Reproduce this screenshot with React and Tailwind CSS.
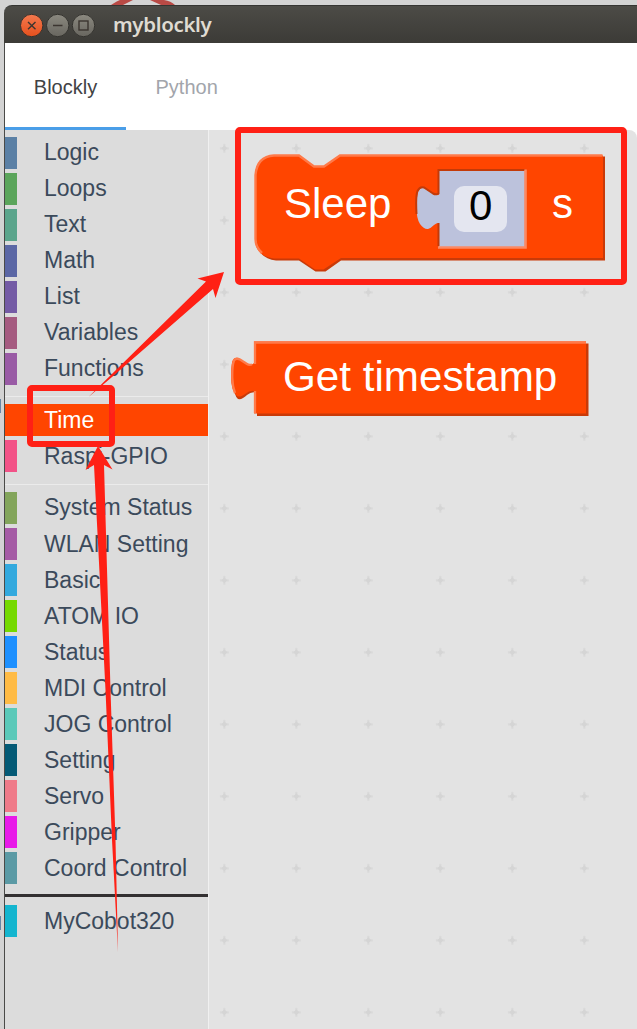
import React from "react";

const groups = [
  {
    items: [
      ["Logic", "bg-[#5b80a5]", "leading-[30px]"],
      ["Loops", "bg-[#5ba55b]", "leading-[30px]"],
      ["Text", "bg-[#5ba58c]", "leading-[30px]"],
      ["Math", "bg-[#5b67a5]", "leading-[30px]"],
      ["List", "bg-[#745ba5]", "leading-[30px]"],
      ["Variables", "bg-[#a55b80]", "leading-[30px]"],
      ["Functions", "bg-[#995ba5]", "leading-[30px]"],
    ],
    divider: "light",
  },
  {
    items: [
      ["Time", "bg-[#ff4500]", "leading-8", true],
      ["Raspi-GPIO", "bg-[#f25287]", "leading-8"],
    ],
    divider: "light",
  },
  {
    items: [
      ["System Status", "bg-[#83a55b]", "leading-[31px]"],
      ["WLAN Setting", "bg-[#a55ba5]", "leading-[33px]"],
      ["Basic", "bg-[#33a9de]", "leading-[33px]"],
      ["ATOM IO", "bg-[#75d900]", "leading-[33px]"],
      ["Status", "bg-[#1e90ff]", "leading-[33px]"],
      ["MDI Control", "bg-[#ffbb45]", "leading-[33px]"],
      ["JOG Control", "bg-[#5bc9b9]", "leading-[33px]"],
      ["Setting", "bg-[#045a76]", "leading-[33px]"],
      ["Servo", "bg-[#ef7b89]", "leading-[33px]"],
      ["Gripper", "bg-[#e81ae8]", "leading-[33px]"],
      ["Coord Control", "bg-[#5b9aa5]", "leading-[33px]"],
    ],
    divider: "dark",
  },
  { items: [["MyCobot320", "bg-[#14b5cf]", "leading-[33px]"]] },
];

function Category({ item }) {
  const [name, color, leading, selected] = item;
  return (
    <li
      className={
        selected
          ? "mb-1 flex h-8 items-start bg-[#ff4500] text-white"
          : "mb-1 flex h-8 items-start text-[#3b4a5b]"
      }
    >
      <span className={`h-[31.5px] w-3 shrink-0 ${color}`} />
      <span className={`ml-[27px] whitespace-nowrap text-[23px] ${leading}`}>{name}</span>
    </li>
  );
}

function Toolbox() {
  return (
    <ul className="w-[203px] shrink-0 bg-[#dcdcdc] pt-[7px]">
      {groups.map((group, i) => (
        <React.Fragment key={i}>
          {group.items.map((item) => (
            <Category key={item[0]} item={item} />
          ))}
          {group.divider === "light" && (
            <li className={i === 1 ? "flex h-4 items-center" : "flex h-[15px] items-center"}>
              <span className="h-px w-full bg-[#ebebeb]" />
            </li>
          )}
          {group.divider === "dark" && (
            <li className="flex h-[17px] items-center pb-[3px]">
              <span className="h-[3px] w-full bg-[#333031]" />
            </li>
          )}
        </React.Fragment>
      ))}
    </ul>
  );
}

function Workspace() {
  return (
    <section className="relative min-w-0 flex-1 overflow-hidden rounded-tr-lg border-l border-[#f0f0f0] bg-[#e3e3e3]">
      <svg className="absolute top-0 -left-px h-[899px] w-[429px]" viewBox="208 130 429 899">
        <defs>
          <pattern id="grid" x="188" y="112" width="72" height="72" patternUnits="userSpaceOnUse">
            <path d="M31.8 36.3h9M36.3 31.8v9" stroke="#dadada" strokeWidth="2.2" />
            <path d="M33.300 36.300L36.300 33.300L39.300 36.300L36.300 39.300Z" fill="#d5d5d5" />
          </pattern>
        </defs>
        <rect x="208" y="130" width="429" height="899" fill="url(#grid)" />

        <path d="M275 156.5H299L314 167H324.5L340 156.5H605V260.5H341L325.5 271.5H315.5L299 260.5H276Q256.500 258 256.500 239V175Q258 158 275 156.500Z" fill="#c93a08" />
        <path d="M274 155H299L314 166H324L339 155.500H603V258H341L323.500 269.500H315L299 258.500H274Q255 256 255 239V175Q256 156 274 155Z" fill="#ff4500" />
        <path d="M262 253Q255.500 247 255.500 239V175Q257 156.500 274 155.500H299L314 166.500H324L340 155.500H602.500" fill="none" stroke="#ff7a49" strokeWidth="2.400" />

        <path d="M439 171V194.500Q437 196 433 194L424 188Q420 187 418 192Q416.500 198 416.500 207Q416.500 219 420 224Q424 229.500 428 229Q431 228 434 225Q437 222.500 439 223V247H525V171Z" fill="#bcc2dc" />
        <path d="M416.500 214Q415.500 196 417.500 191Q420 186 424 187.500L433 193.500Q436 195 438.500 193.500V170H525M438.500 246V223" fill="none" stroke="#c33a08" strokeWidth="2" />
        <path d="M438 247.500H525.500V169.500" fill="none" stroke="#fb8964" strokeWidth="2.600" />
        <rect x="454" y="186" width="53" height="46" rx="10" fill="#e4e6f0" />

        <path d="M257 343.500H588.500V416H257V393Q252 391 247 395Q242 400 238 399Q234 396 233 382V367Q234 360 238 361L249 365Q254 367 257 363Z" fill="#c93a08" />
        <path d="M254 341.500H586V413.500H254V391Q250 390 246 393.500Q240 398 237 396Q231 391 231 376Q231 361 234 358.500Q237 357 240 359L247 364Q252 366 254 363Z" fill="#ff4500" />
        <path d="M255 413V391M255 364V342.500H586M252 364.500Q249 365.500 247 364L240 359.500Q236 357.500 234 360.500Q232 366 232.300 378Q232.500 386 235 393" fill="none" stroke="#ff7a49" strokeWidth="2.300" />
      </svg>
      <span className="absolute top-[49px] left-[75px] text-[42px] leading-[50px] text-white">Sleep</span>
      <span className="absolute top-[51px] left-[260px] text-[42px] leading-[50px] text-black">0</span>
      <span className="absolute top-[49px] left-[343px] text-[42px] leading-[50px] text-white">s</span>
      <span className="absolute top-[222px] left-[74px] whitespace-nowrap text-[42.2px] leading-[50px] text-white">Get timestamp</span>
    </section>
  );
}

function TitleBar() {
  return (
    <header className="flex h-[38px] shrink-0 items-center rounded-tl-lg border-t border-[#353532] bg-linear-to-b from-[#4c4b46] to-[#3c3b37] pl-4">
      <svg className="h-7 w-[78px]" viewBox="20 11 78 28">
        <defs>
          <linearGradient id="closeFill" x1="0" y1="0" x2="0" y2="1">
            <stop stopColor="#f4794e" />
            <stop offset="1" stopColor="#e5501d" />
          </linearGradient>
          <linearGradient id="buttonFill" x1="0" y1="0" x2="0" y2="1">
            <stop stopColor="#8b8980" />
            <stop offset="1" stopColor="#68665f" />
          </linearGradient>
        </defs>
        <g stroke="#33322e" strokeWidth="1">
          <circle cx="31.700" cy="25.500" r="11.200" fill="url(#closeFill)" />
          <circle cx="57.700" cy="25.500" r="11.200" fill="url(#buttonFill)" />
          <circle cx="83.500" cy="25.500" r="11.200" fill="url(#buttonFill)" />
        </g>
        <g fill="none" stroke="#3b3530" strokeWidth="1.400">
          <path d="M28 22L35.500 29.200M35.500 22L28 29.200M53 25.500H62.500" />
          <rect x="79" y="21" width="9" height="9" />
        </g>
      </svg>
      <h1 className="ml-[15px] pb-[2px] font-['Noto_Sans','Open_Sans',sans-serif] text-[20.5px] leading-8 font-semibold tracking-[-0.35px] text-[#dfdbd2]">
        myblockly
      </h1>
    </header>
  );
}

function Annotations() {
  return (
    <svg className="pointer-events-none absolute inset-0 h-[1029px] w-[637px]" viewBox="0 0 637 1029">
      <g fill="none" stroke="#ff2015" strokeWidth="6">
        <rect x="238" y="130" width="386" height="152" rx="2" />
        <rect x="30" y="388" width="82" height="56" rx="2" />
      </g>
      <g fill="#ff2015">
        <path d="M88.500 397L206 281.500L197.500 278.500L224 272L215.500 298L213 289L112 377Z" />
        <path d="M98 446L112.500 469.500L104 465L110.500 690L115.500 840L118 952L112 840L105.500 690L94 465L85.500 470Z" />
      </g>
    </svg>
  );
}

export default function App() {
  return (
    <div className="relative flex h-[1029px] w-[637px] flex-col overflow-hidden bg-[#d3d3d3] pl-1 font-['Liberation_Sans',Arial,sans-serif]">
      <div className="h-[5px] shrink-0">
        <svg className="ml-[106px] h-[5px] w-[66px]" viewBox="110 0 66 5">
          <path d="M111 5Q117 1 120 0H133L123 5Z" fill="#b94a45" />
          <path d="M150 0H164Q171 1 175 5H161Z" fill="#b94a45" />
        </svg>
      </div>
      <TitleBar />
      <div className="flex min-h-0 flex-1 flex-col border-l border-[#4a4a48] bg-white">
        <nav className="flex h-[87px] shrink-0 text-[20px]">
          <button className="w-[121px] border-b-3 border-[#4a9ee8] pt-[3px] text-[#414244]">Blockly</button>
          <button className="ml-[29.5px] text-[#a2a5ab]">Python</button>
        </nav>
        <main className="flex min-h-0 flex-1">
          <Toolbox />
          <Workspace />
        </main>
      </div>
      <span className="absolute top-[399px] left-0 h-3.5 w-px bg-[#6686a5]" />
      <span className="absolute top-[916px] left-0 h-3.5 w-px bg-[#6686a5]" />
      <Annotations />
    </div>
  );
}
